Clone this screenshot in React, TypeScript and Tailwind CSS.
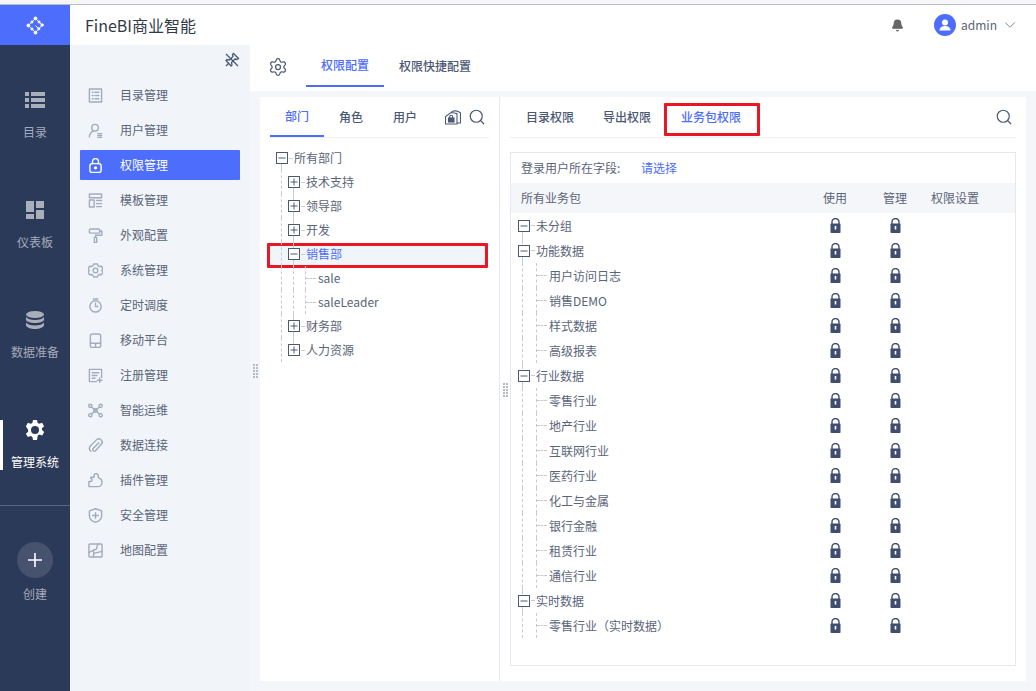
import { Bell, ChevronDown, Search, Settings } from "lucide-react";
import type { ReactNode } from "react";

const RAIL = [
  {
    label: "目录",
    icon: (
      <svg viewBox="0 0 20 20" className="h-5 w-5" fill="#a9aebb">
        <rect x="0" y="2" width="4" height="4" />
        <rect x="6" y="2" width="14" height="4" />
        <rect x="0" y="8" width="4" height="4" />
        <rect x="6" y="8" width="14" height="4" />
        <rect x="0" y="14" width="4" height="4" />
        <rect x="6" y="14" width="14" height="4" />
      </svg>
    ),
  },
  {
    label: "仪表板",
    icon: (
      <svg viewBox="0 0 20 20" className="h-5 w-5" fill="#a9aebb">
        <rect x="1" y="1" width="8" height="11" />
        <rect x="11" y="1" width="8" height="7" />
        <rect x="1" y="14" width="8" height="5" />
        <rect x="11" y="10" width="8" height="9" />
      </svg>
    ),
  },
  {
    label: "数据准备",
    icon: (
      <svg viewBox="0 0 20 20" className="h-5 w-5" fill="#a9aebb">
        <ellipse cx="10" cy="4.500" rx="9" ry="3.500" />
        <path d="M1 7c1.500 2 4.500 3 9 3s7.500-1 9-3v3c-1 2-4.500 3-9 3s-8-1-9-3z" />
        <path d="M1 12.500c1.500 2 4.500 3 9 3s7.500-1 9-3v3c-1 2-4.500 3.500-9 3.500s-8-1.500-9-3.500z" />
      </svg>
    ),
  },
  {
    label: "管理系统",
    active: true,
    icon: (
      <svg viewBox="0 0 20 20" className="h-5 w-5" fill="none">
        <path
          d="M8 0h4l.6 2.900 1.700.9 2.800-1 2 3.400-2.200 2 .1 1.800 2.200 2-2 3.400-2.800-1-1.700 1L12 20H8l-.6-2.900-1.700-1-2.800 1-2-3.400 2.200-2V9.800L.9 6.200l2-3.400 2.800 1 1.700-.9z"
          fill="#fff"
        />
        <circle cx="10" cy="10" r="4" fill="#2c3a59" />
      </svg>
    ),
  },
];

const stroke = {
  fill: "none",
  stroke: "#a3abbd",
  strokeWidth: 1.5,
  strokeLinecap: "round" as const,
  strokeLinejoin: "round" as const,
};

function MenuIcon({ children, color }: { children: ReactNode; color?: string }) {
  return (
    <svg viewBox="0 0 16 16" className="h-[15px] w-[15px] shrink-0" {...stroke} stroke={color ?? stroke.stroke}>
      {children}
    </svg>
  );
}

const MENU: { label: string; active?: boolean; icon: ReactNode }[] = [
  {
    label: "目录管理",
    icon: (
      <>
        <rect x="1.500" y="1" width="13" height="14" />
        <path d="M4.500 4.500h1M7.500 4.500h4M4.500 8h1M7.500 8h4M4.500 11.500h1M7.500 11.500h4" />
      </>
    ),
  },
  {
    label: "用户管理",
    icon: (
      <>
        <circle cx="7.500" cy="5" r="3.500" />
        <path d="M1.500 15c0-3 2-6 4.500-6.500M10.500 11.500h4M10.500 13.500h4M10.500 15.300h4" />
      </>
    ),
  },
  {
    label: "权限管理",
    active: true,
    icon: (
      <>
        <rect x="2" y="6" width="12" height="9.500" rx="2.500" />
        <path d="M4.800 6V3.800a3.200 3.200 0 0 1 6.400 0V6" />
        <circle cx="8" cy="10.500" r="1" fill="#fff" />
      </>
    ),
  },
  {
    label: "模板管理",
    icon: (
      <>
        <rect x="1.500" y="1" width="13" height="4" />
        <rect x="1.500" y="7.500" width="5" height="7.500" />
        <path d="M9 8h5.500M9 11.300h5.500M9 14.500h5.500" />
      </>
    ),
  },
  {
    label: "外观配置",
    icon: (
      <>
        <rect x="1.500" y="1" width="11" height="4.500" rx="1" />
        <path d="M12.500 3.200h2.300v4.600H8V10" />
        <rect x="6.800" y="10" width="2.500" height="5.500" />
      </>
    ),
  },
  {
    label: "系统管理",
    icon: (
      <>
        <path d="M6 1h4l.6 1.800 1.800 1 1.900-.4 1.700 3-1.300 1.600 1.300 1.600-1.700 3-1.900-.4-1.800 1L10 15H6l-.6-1.800-1.800-1-1.900.4-1.700-3L1.300 8 0 6.400l1.700-3 1.900.4 1.800-1z" />
        <circle cx="8" cy="8" r="2.500" />
      </>
    ),
  },
  {
    label: "定时调度",
    icon: (
      <>
        <circle cx="8" cy="9" r="6" />
        <path d="M5.500 1h5M8 5.500V9h2.500" />
      </>
    ),
  },
  {
    label: "移动平台",
    icon: (
      <>
        <rect x="2.500" y="1" width="11" height="14.500" rx="2" />
        <path d="M2.500 11h11M8 11v4.500" />
      </>
    ),
  },
  {
    label: "注册管理",
    icon: (
      <>
        <path d="M9 14.500H1.500V1.500h13V10" />
        <path d="M4.500 5h7M4.500 8h5M4.500 11h3M12.500 10.500v5M10 13h5" />
      </>
    ),
  },
  {
    label: "智能运维",
    icon: (
      <>
        <circle cx="2.500" cy="3" r="1.700" />
        <circle cx="13.500" cy="3" r="1.700" />
        <circle cx="2.500" cy="13" r="1.700" />
        <circle cx="13.500" cy="13" r="1.700" />
        <path d="M3.800 4.200l8.400 7.600M12.200 4.200l-8.400 7.600" />
        <circle cx="8" cy="8" r="1.800" />
      </>
    ),
  },
  {
    label: "数据连接",
    icon: <path d="M11.500 5 5.500 11.200a1.700 1.700 0 0 0 2.500 2.300l6-6.500a3.500 3.500 0 0 0-5-5L2.500 8.500a4 4 0 0 0 .5 5.500" />,
  },
  {
    label: "插件管理",
    icon: (
      <path d="M1 9h2a1.500 1.500 0 0 0 0-3V4.500h3.500V3a2.200 2.200 0 0 1 4.400 0v1.500a1 1 0 0 0 1 1 4.500 4.500 0 0 1 3 4.500 4.500 4.500 0 0 1-4 4.500H1z" />
    ),
  },
  {
    label: "安全管理",
    icon: (
      <>
        <path d="M8 .8l6.500 2.200v5.500c0 3-2.500 5.500-6.500 6.700-4-1.200-6.500-3.700-6.500-6.700V3z" />
        <path d="M8 5v6M5 8h6" />
      </>
    ),
  },
  {
    label: "地图配置",
    icon: (
      <>
        <rect x="1" y="1" width="14" height="14" rx="1" />
        <path d="M1 10 6 7.500l3-1 1.500-5.500M6 7.500V15M6 11l9-2" />
      </>
    ),
  },
];

function Box({ open }: { open?: boolean }) {
  return (
    <svg viewBox="0 0 12 12" className="h-3 w-3 shrink-0" fill="#fff" stroke="#4c5975" strokeWidth="1">
      <rect x="0.500" y="0.500" width="11" height="11" />
      <path d={open ? "M2.500 6h7" : "M2.500 6h7M6 2.500v7"} />
    </svg>
  );
}

function Lock() {
  return (
    <svg viewBox="0 0 11 15" className="h-[15px] w-[11px]">
      <path d="M2 6.500V4a3.500 3.500 0 0 1 7 0v2.500" fill="none" stroke="#3f4e6e" strokeWidth="1.400" />
      <rect x="0.500" y="5.500" width="10" height="9.500" rx="0.800" fill="#3f4e6e" />
      <rect x="4.700" y="8" width="1.600" height="3.500" fill="#fff" />
    </svg>
  );
}

type NodeProps = {
  label: string;
  slot: number;
  offset: number;
  depth?: number;
  leafWidth?: number;
  leaf?: boolean;
  open?: boolean;
  above?: boolean;
  below?: boolean;
  blue?: boolean;
};

function TreeNode({ label, slot, offset, depth = 0, leafWidth = 18, leaf, open, above, below, blue }: NodeProps) {
  return (
    <div className="relative z-10 flex h-full items-center">
      {Array.from({ length: depth }).map((_, i) => (
        <div key={i} className="h-full shrink-0" style={{ width: slot, paddingLeft: offset }}>
          <div className="h-full border-l border-dashed border-[#c8cbd2]" />
        </div>
      ))}
      {leaf ? (
        <div className="flex h-full shrink-0 items-center" style={{ width: leafWidth, paddingLeft: offset }}>
          <div className="h-full border-l border-dashed border-[#c8cbd2]" />
          <div className="mr-[2px] flex-1 border-t border-dashed border-[#c8cbd2]" />
        </div>
      ) : (
        <div className="relative flex h-full w-[18px] shrink-0 items-center">
          {above && <div className="absolute top-0 h-[6px] border-l border-dashed border-[#c8cbd2]" style={{ left: offset }} />}
          {below && <div className="absolute bottom-0 h-[6px] border-l border-dashed border-[#c8cbd2]" style={{ left: offset }} />}
          <Box open={open} />
          <div className="ml-[1px] w-[4px] border-t border-dashed border-[#c8cbd2]" />
        </div>
      )}
      <span className={blue ? "text-[#4d6dfc]" : "text-[#5a6478]"}>{label}</span>
    </div>
  );
}

const LEFT_TREE: (Omit<NodeProps, "slot" | "offset"> & { mark?: boolean })[] = [
  { label: "所有部门", open: true, below: true },
  { label: "技术支持", depth: 1, below: true },
  { label: "领导部", depth: 1, above: true, below: true },
  { label: "开发", depth: 1, above: true, below: true },
  { label: "销售部", depth: 1, open: true, above: true, below: true, blue: true, mark: true },
  { label: "sale", depth: 2, leaf: true },
  { label: "saleLeader", depth: 2, leaf: true },
  { label: "财务部", depth: 1, above: true, below: true },
  { label: "人力资源", depth: 1, above: true },
];

const RIGHT_TREE: Omit<NodeProps, "slot" | "offset">[] = [
  { label: "未分组", open: true, below: true },
  { label: "功能数据", open: true, above: true, below: true },
  ...["用户访问日志", "销售DEMO", "样式数据", "高级报表"].map((label) => ({ label, depth: 1, leaf: true })),
  { label: "行业数据", open: true, above: true, below: true },
  ...["零售行业", "地产行业", "互联网行业", "医药行业", "化工与金属", "银行金融", "租赁行业", "通信行业"].map((label) => ({
    label,
    depth: 1,
    leaf: true,
  })),
  { label: "实时数据", open: true, above: true, below: true },
  { label: "零售行业（实时数据）", depth: 1, leaf: true },
];

function Grip() {
  return (
    <div className="grid w-[5px] grid-cols-2 gap-[1px]">
      {Array.from({ length: 10 }).map((_, i) => (
        <div key={i} className="h-[2px] w-[2px] bg-[#b4bac6]" />
      ))}
    </div>
  );
}

export default function App() {
  return (
    <div
      className="flex h-[691px] w-[1036px] flex-col overflow-hidden bg-[#f5f6f9] text-xs text-[#5a6478]"
      style={{ fontFamily: '"Noto Sans CJK SC", "Noto Sans", sans-serif' }}
    >
      <div className="h-[5px] shrink-0 border-b border-[#b9bdc8] bg-[#f6f6f6]" />

      <header className="flex h-10 shrink-0 items-center bg-white">
        <div className="flex h-full w-[70px] items-center justify-center bg-[#4d6dfc]">
          <svg viewBox="0 0 20 20" className="h-[19px] w-[19px]" fill="#fff" stroke="#fff" strokeWidth="1">
            <path d="M10 2.500 2.500 10 10 17.500 13.500 13.500 10 10M10 2.500 17 9.500 13.500 13.500" fill="none" />
            <circle cx="10" cy="2.500" r="1.500" />
            <circle cx="2.500" cy="10" r="1.500" />
            <circle cx="10" cy="17.500" r="1.500" />
            <circle cx="6.300" cy="6.300" r="1.100" />
            <circle cx="6.300" cy="13.700" r="1.100" />
            <circle cx="13.800" cy="6.300" r="1.100" />
            <circle cx="17" cy="9.500" r="1.300" />
            <circle cx="13.500" cy="13.500" r="1.100" />
          </svg>
        </div>
        <div className="ml-[15px] text-base text-[#333a47]">FineBI商业智能</div>
        <Bell className="ml-[695px] h-[13px] w-[13px]" fill="#666" stroke="#666" />
        <div className="ml-[30px] flex h-[22px] w-[22px] items-center justify-center rounded-full bg-[#4d6dfc]">
          <svg viewBox="0 0 12 12" className="h-3 w-3" fill="#fff">
            <circle cx="6" cy="3.500" r="3" />
            <path d="M0.500 11.500c0-3 2-4.500 5.500-4.500s5.500 1.500 5.500 4.500z" />
          </svg>
        </div>
        <span className="ml-[5px] text-xs text-[#5a6478]">admin</span>
        <ChevronDown className="ml-[4px] h-[18px] w-[18px]" stroke="#7b8494" strokeWidth={1.300} />
      </header>

      <div className="flex min-h-0 flex-1">
        <nav className="flex w-[70px] shrink-0 flex-col items-center bg-[#2c3a59] pt-[45px]">
          <div className="flex w-full flex-col gap-[60px]">
            {RAIL.map((item) => (
              <div
                key={item.label}
                className={`flex h-[50px] flex-col items-center border-l-[3px] pr-[3px] ${
                  item.active ? "border-white text-white" : "border-transparent text-[#a5abba]"
                }`}
              >
                {item.icon}
                <span className="mt-[14px] leading-4">{item.label}</span>
              </div>
            ))}
          </div>
          <div className="mt-[35px] w-full border-t border-[#5a6680]" />
          <div className="mt-9 flex h-9 w-9 items-center justify-center rounded-full bg-[#46526e]">
            <svg viewBox="0 0 16 16" className="h-4 w-4" stroke="#fff" strokeWidth="1.600">
              <path d="M8 1v14M1 8h14" />
            </svg>
          </div>
          <span className="mt-2 leading-4 text-[#a5abba]">创建</span>
        </nav>

        <aside className="relative flex w-[180px] shrink-0 flex-col gap-[5px] bg-[#f1f5fa] px-[10px] pt-[35px]">
          <svg
            viewBox="0 0 16 16"
            className="absolute right-[10px] top-[7px] h-4 w-4"
            fill="none"
            stroke="#4c5975"
            strokeWidth="1.300"
          >
            <path d="M9.500 1.500 14.500 6.500 13 7.500 11 7l-3.500 3.500.5 2.500-1 1L2 8.500l1-1 2.500.5L9 4.500 8.500 2.500z" />
            <path d="M2 14 5 11M2 2l12 12" />
          </svg>
          {MENU.map((item) => (
            <div
              key={item.label}
              className={`flex h-[30px] shrink-0 items-center rounded-[1px] pl-[8px] ${
                item.active ? "bg-[#4d6dfc] text-white" : "text-[#5a6478]"
              }`}
            >
              <MenuIcon color={item.active ? "#fff" : undefined}>{item.icon}</MenuIcon>
              <span className="ml-[17px]">{item.label}</span>
            </div>
          ))}
        </aside>

        <main className="flex min-w-0 flex-1 flex-col">
          <div className="flex h-[46px] shrink-0 items-start bg-white pl-[18px]">
            <Settings className="mt-[12px] h-[20px] w-[20px]" stroke="#4c5975" strokeWidth={1.500} />
            <div className="ml-[18px] flex h-[42px] w-[78px] items-center justify-center border-b-2 border-[#4d6dfc] font-medium text-[#4d6dfc]">
              权限配置
            </div>
            <div className="ml-[15px] flex h-[42px] items-center font-medium text-[#4c5975]">权限快捷配置</div>
          </div>

          <div className="flex min-h-0 flex-1 pb-[10px] pr-[10px] pt-[6px]">
            <div className="flex w-[10px] shrink-0 items-center justify-center pb-[36px]">
              <Grip />
            </div>

            <section className="flex w-[240px] shrink-0 flex-col border-r border-[#e6e8ee] bg-white">
              <div className="mx-[10px] flex h-[41px] shrink-0 items-center border-b border-[#eef0f4]">
                <div className="flex h-[40px] w-[54px] items-center justify-center border-b-2 border-[#4d6dfc] font-medium text-[#4d6dfc]">
                  部门
                </div>
                <div className="w-[54px] text-center font-medium text-[#4c5975]">角色</div>
                <div className="w-[54px] text-center font-medium text-[#4c5975]">用户</div>
                <svg viewBox="0 0 16 15" className="ml-[13px] h-[15px] w-4" fill="none" stroke="#4c5975" strokeWidth="1.100">
                  <path d="M0.500 14V6.500L6 2.500l6 1v10.500z" />
                  <path d="M6 2.500C8 0 13 0.500 15.500 3v10h-3.500" />
                  <rect x="3.500" y="8" width="5.500" height="4" fill="#4c5975" />
                  <path d="M4.700 8V6.800a1.500 1.500 0 0 1 3 0V8" />
                </svg>
                <Search className="ml-[7px] h-[18px] w-[18px]" stroke="#4c5975" strokeWidth={1.600} />
              </div>
              <div className="pl-4 pt-[8px]">
                {LEFT_TREE.map(({ mark, ...node }) => (
                  <div key={node.label} className="relative h-6">
                    {mark && (
                      <div className="absolute -left-[9px] top-[1px] h-[25px] w-[221px] rounded-[1px] border-[3px] border-[#ea1623] bg-[#f0f5fa]" />
                    )}
                    <TreeNode {...node} slot={12} offset={5} />
                  </div>
                ))}
              </div>
            </section>

            <section className="relative flex min-w-0 flex-1 flex-col bg-white px-[5px]">
              <div className="absolute left-[3px] top-[286px]">
                <Grip />
              </div>
              <div className="relative mx-[5px] flex h-[41px] shrink-0 items-center border-b border-[#eef0f4] pr-[3px] font-medium text-[#4c5975]">
                <span className="ml-4">目录权限</span>
                <span className="ml-[29px]">导出权限</span>
                <span className="ml-[30px] text-[#4d6dfc]">业务包权限</span>
                <Search className="ml-auto h-[18px] w-[18px]" stroke="#4c5975" strokeWidth={1.600} />
                <div className="absolute left-[154px] top-[6px] h-[33px] w-[96px] rounded-[1px] border-[3px] border-[#ea1623]" />
              </div>

              <div className="mx-[5px] mb-[15px] mt-[14px] flex min-h-0 flex-1 flex-col border border-[#e6e8ee]">
                <div className="flex h-[30px] shrink-0 items-center pl-[10px]">
                  <span className="w-[120px]">登录用户所在字段:</span>
                  <span className="text-[#4d6dfc]">请选择</span>
                </div>
                <div className="flex h-[30px] shrink-0 items-center bg-[#f5f6f9] pl-[10px]">
                  <span className="w-[284px]">所有业务包</span>
                  <span className="w-[60px] text-center">使用</span>
                  <span className="w-[60px] text-center">管理</span>
                  <span className="ml-[6px]">权限设置</span>
                </div>
                {RIGHT_TREE.map((node) => (
                  <div key={node.label} className="flex h-[25px] shrink-0 items-center pl-[7px]">
                    <div className="h-full w-[287px]">
                      <TreeNode {...node} slot={14} offset={4} leafWidth={17} />
                    </div>
                    <div className="flex w-[60px] justify-center">
                      <Lock />
                    </div>
                    <div className="flex w-[60px] justify-center">
                      <Lock />
                    </div>
                  </div>
                ))}
              </div>
            </section>
          </div>
        </main>
      </div>
    </div>
  );
}
